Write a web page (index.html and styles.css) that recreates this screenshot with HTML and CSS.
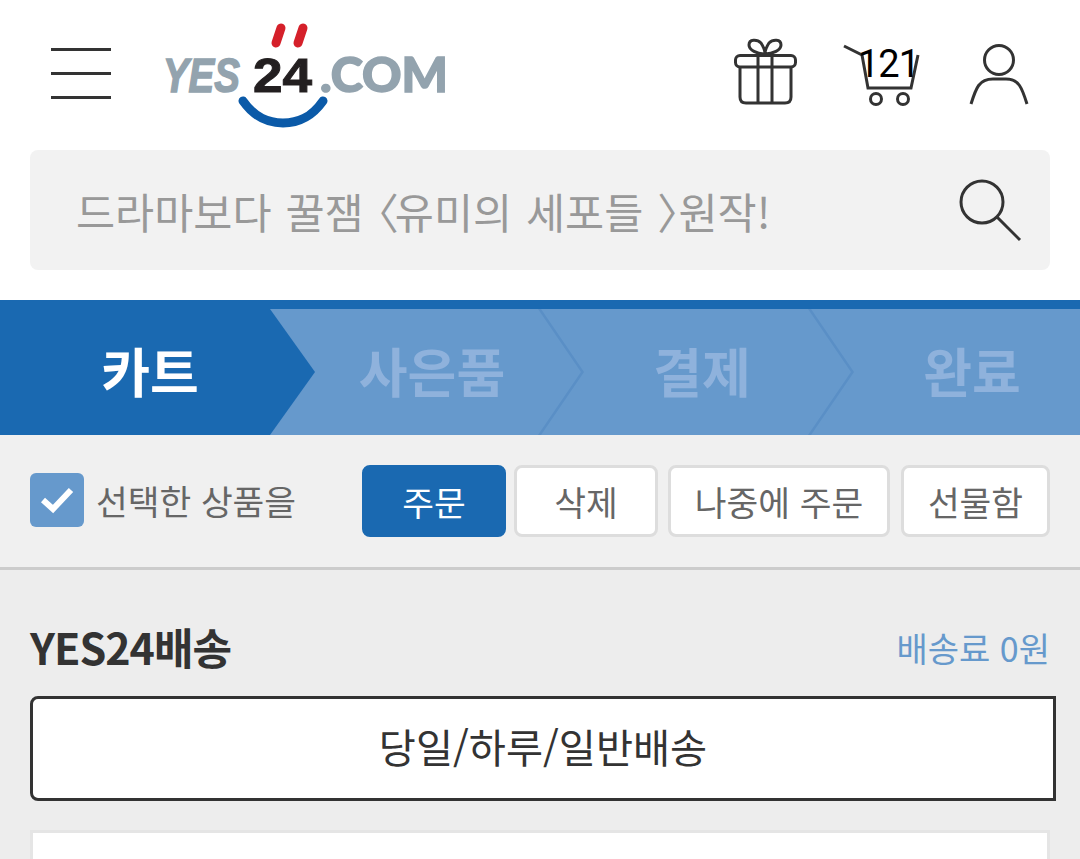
FILE: index.html
```html
<!DOCTYPE html>
<html lang="ko">
<head>
    <meta charset="UTF-8">
    <meta name="viewport" content="width=device-width, initial-scale=1.0">
    <title>YES24 카트</title>
    <link rel="stylesheet" href="styles.css">
</head>
<body>
    <!-- Top bar: menu, logo, icons -->
    <header class="top-bar">
        <div class="menu-btn"><span></span><span></span><span></span></div>
        <svg class="logo" width="290" height="110" viewBox="160 20 290 110">
            <path d="M281 28 L276 43 M303 28 L298 43" stroke="#d5202a" stroke-width="9" stroke-linecap="round" fill="none"/>
            <path d="M243 101 C255 118 268 123 283 123 C298 123 311 118 323 101" stroke="#0b5aa8" stroke-width="9" stroke-linecap="round" fill="none"/>
            <text class="logo-gray" font-style="italic" transform="translate(163 92) scale(.8 1)">YES</text>
            <text class="logo-black" x="253" y="92" textLength="59" lengthAdjust="spacingAndGlyphs">24</text>
            <text class="logo-gray logo-com" x="320" y="92" textLength="128" lengthAdjust="spacingAndGlyphs">.COM</text>
        </svg>
        <div class="top-icons">
            <svg width="70" height="110" viewBox="730 20 70 110" class="line-icon">
                <rect x="735.5" y="55.5" width="60" height="11.5" rx="4.5"/>
                <path d="M740 67 V97 Q740 103 746 103 H785 Q791 103 791 97 V67"/>
                <path d="M758 55 V103 M772 55 V103"/>
                <path d="M765 54 C757 54 749 50 749 45 C749 39 757 39 761 43 C763 46 765 50 765 54 C765 50 767 46 769 43 C773 39 781 39 781 45 C781 50 773 54 765 54 Z"/>
            </svg>
            <div class="cart">
                <svg width="85" height="110" viewBox="840 20 85 110" class="line-icon">
                    <path d="M844 46 L862 55 L868 88 H911 L918 55"/>
                    <circle cx="876" cy="99" r="5.5"/>
                    <circle cx="903" cy="99" r="5.5"/>
                </svg>
                <span class="cart-count">121</span>
            </div>
            <svg width="67" height="110" viewBox="965 20 67 110" class="line-icon">
                <circle cx="999" cy="60" r="14.5"/>
                <path d="M971 104 C976 88 979 79 993 79 H1006 C1019 79 1022 88 1027 104"/>
            </svg>
        </div>
    </header>

    <!-- Search box -->
    <div class="search-box">
        <span class="search-text">드라마보다 꿀잼 <span class="bracket bracket-open">〈</span>유미의 세포들 <span class="bracket">〉</span>원작!</span>
        <svg width="64" height="64" viewBox="958 178 64 64" class="line-icon">
            <circle cx="982" cy="202" r="21"/>
            <path d="M997 217 L1020 240"/>
        </svg>
    </div>

    <!-- Order steps -->
    <nav class="steps">
        <div class="step step-active">카트</div>
        <div class="step">사은품</div>
        <div class="step">결제</div>
        <div class="step step-last">완료</div>
    </nav>

    <!-- Actions for selected items -->
    <div class="action-bar">
        <label class="select-all">
            <span class="check-box">
                <svg width="34" height="28" viewBox="0 0 34 28"><path d="M3 14 L13 23 L31 4" fill="none" stroke="#fff" stroke-width="6"/></svg>
            </span>
            선택한 상품을
        </label>
        <div class="action-btns">
            <button class="btn btn-primary">주문</button>
            <button class="btn btn-delete">삭제</button>
            <button class="btn btn-later">나중에 주문</button>
            <button class="btn btn-gift">선물함</button>
        </div>
    </div>

    <!-- Delivery section -->
    <main class="delivery">
        <div class="delivery-head">
            <h2>YES24배송</h2>
            <span class="delivery-fee">배송료 0원</span>
        </div>
        <div class="delivery-tab">당일/하루/일반배송</div>
        <div class="item-card"></div>
    </main>
</body>
</html>
```

FILE: styles.css
```css
/* Page base */
html, body {
    height: 859px;
    overflow: hidden;
}
body {
    margin: 0;
    background-color: #fff;
    font-family: "Noto Sans CJK KR", "Noto Sans", sans-serif;
    color: #333;
}
/* Top bar */
.top-bar {
    display: flex;
    align-items: center;
    height: 150px;
    padding: 0 48px 0 51px;
    box-sizing: border-box;
}
.menu-btn {
    display: flex;
    flex-direction: column;
    justify-content: space-between;
    align-self: flex-start;
    width: 60px;
    height: 51px;
    margin-top: 48px;
}
.menu-btn span {
    height: 3px;
    background-color: #333;
}
.logo {
    margin-left: 49px;
}
.logo text {
    font-family: "Liberation Sans", sans-serif;
    font-size: 48px;
    font-weight: 700;
}
.logo-gray {
    fill: #93a3ae;
    stroke: #93a3ae;
    stroke-width: 1.5;
}
.logo-black {
    fill: #231f20;
    stroke: #231f20;
    stroke-width: 1;
}
.logo .logo-com {
    font-family: "Lato", sans-serif;
    font-weight: 900;
}
.top-icons {
    display: flex;
    gap: 40px;
    margin-left: auto;
}
.line-icon {
    fill: none;
    stroke: #333;
    stroke-width: 3;
    display: block;
}
.cart {
    position: relative;
}
.cart-count {
    position: absolute;
    top: 23px;
    left: 18px;
    font-family: Roboto, sans-serif;
    font-size: 38px;
    line-height: 42px;
    letter-spacing: -1px;
    color: #000;
}
/* Search box */
.search-box {
    display: flex;
    align-items: center;
    justify-content: space-between;
    height: 120px;
    margin: 0 30px 30px;
    padding: 0 28px 0 46px;
    background-color: #f2f2f2;
    border-radius: 8px;
}
.search-text {
    font-size: 42.5px;
    word-spacing: 2px;
    color: #999;
}
.bracket {
    font-feature-settings: "halt";
}
.bracket-open {
    letter-spacing: -4px;
}
/* Steps */
.steps {
    display: grid;
    grid-template-columns: repeat(4, 270px);
    height: 126px;
    border-top: 9px solid #1a69b1;
    background-color: #6699cc;
    overflow: hidden;
}
.step {
    position: relative;
    display: flex;
    align-items: center;
    justify-content: center;
    padding-left: 54px;
    padding-bottom: 5px;
    font-size: 53px;
    font-weight: 700;
    color: #8fb2dc;
}
.step::after {
    content: "";
    position: absolute;
    top: 0;
    bottom: 0;
    left: 100%;
    width: 46px;
    margin-left: -2px;
    background-color: #5a8fc6;
    clip-path: polygon(0 0, 3px 0, 100% 50%, 3px 100%, 0 100%, calc(100% - 3px) 50%);
    z-index: 1;
}
.step-last::after {
    display: none;
}
.step-active {
    padding-left: 30px;
    color: #fff;
    background-color: #1a69b1;
}
.step-active::after {
    width: 45px;
    margin-left: 0;
    background-color: #1a69b1;
    clip-path: polygon(0 0, 100% 50%, 0 100%);
}
/* Action bar */
.action-bar {
    display: flex;
    align-items: center;
    justify-content: space-between;
    height: 135px;
    padding: 0 30px;
    background-color: #f0f0f0;
    border-bottom: 3px solid #ccc;
    box-sizing: border-box;
}
.select-all {
    display: flex;
    align-items: center;
    gap: 12px;
    font-size: 34.5px;
    color: #666;
    margin-bottom: 2px;
}
.check-box {
    display: flex;
    align-items: center;
    justify-content: center;
    width: 54px;
    height: 54px;
    background-color: #6699cc;
    border-radius: 6px;
}
.action-btns {
    display: flex;
    gap: 10px;
    margin-bottom: 1px;
}
.btn {
    height: 72px;
    padding: 0;
    font-family: inherit;
    font-size: 34.5px;
    color: #666;
    background-color: #fff;
    border: 3px solid #ddd;
    border-radius: 8px;
}
.btn-primary {
    width: 144px;
    margin-right: -2px;
    color: #fff;
    background-color: #1a69b1;
    border-color: #1a69b1;
}
.btn-delete {
    width: 144px;
}
.btn-later {
    width: 222px;
}
.btn-gift {
    width: 149px;
    margin-left: 1px;
}
/* Delivery section */
.delivery {
    height: 291px;
    padding: 0 30px;
    background-color: #ededed;
    overflow: hidden;
}
.delivery-head {
    display: flex;
    align-items: center;
    justify-content: space-between;
    padding-top: 48px;
    height: 58px;
    margin-bottom: 20px;
}
.delivery-head h2 {
    margin: 0 0 3px;
    font-size: 43px;
    font-weight: 700;
    letter-spacing: -1px;
}
.delivery-fee {
    font-size: 34px;
    color: #6699cc;
}
.delivery-tab {
    display: flex;
    align-items: center;
    justify-content: center;
    width: 1026px;
    height: 105px;
    padding-bottom: 6px;
    box-sizing: border-box;
    background-color: #fff;
    border: 3px solid #333;
    border-radius: 8px 0 0 8px;
    font-size: 40.3px;
}
.item-card {
    height: 120px;
    margin-top: 29px;
    background-color: #fff;
    border: 3px solid #e5e5e5;
}
```
